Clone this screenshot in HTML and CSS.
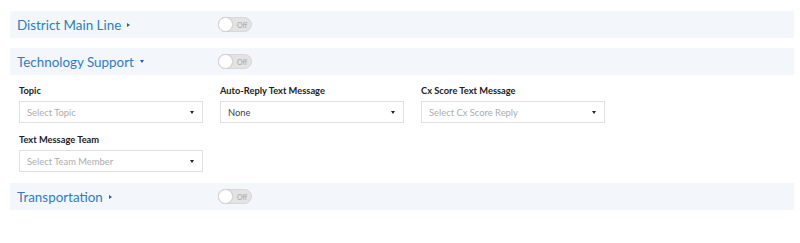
FILE: index.html
```html
<!DOCTYPE html>
<html>
<head>
<meta charset="utf-8">
<link rel="stylesheet" href="styles.css">
</head>
<body>
<div class="page">
  <section class="group">
    <div class="group-head">
      <div class="head-label"><span class="title">District Main Line</span><span class="caret caret-right"></span></div>
      <div class="toggle"><span class="knob"></span><span class="toggle-text">Off</span></div>
    </div>
  </section>

  <section class="group">
    <div class="group-head">
      <div class="head-label"><span class="title">Technology Support</span><span class="caret caret-down"></span></div>
      <div class="toggle"><span class="knob"></span><span class="toggle-text">Off</span></div>
    </div>
    <div class="form">
      <div class="field">
        <div class="label">Topic</div>
        <div class="select placeholder"><span>Select Topic</span><span class="arrow"></span></div>
      </div>
      <div class="field">
        <div class="label">Auto-Reply Text Message</div>
        <div class="select"><span>None</span><span class="arrow"></span></div>
      </div>
      <div class="field">
        <div class="label">Cx Score Text Message</div>
        <div class="select placeholder"><span>Select Cx Score Reply</span><span class="arrow"></span></div>
      </div>
      <div class="field">
        <div class="label">Text Message Team</div>
        <div class="select placeholder"><span>Select Team Member</span><span class="arrow"></span></div>
      </div>
    </div>
  </section>

  <section class="group">
    <div class="group-head">
      <div class="head-label"><span class="title">Transportation</span><span class="caret caret-right"></span></div>
      <div class="toggle"><span class="knob"></span><span class="toggle-text">Off</span></div>
    </div>
  </section>
</div>
</body>
</html>
```
FILE: styles.css
```css
html, body {
  margin: 0;
  padding: 0;
  background: #ffffff;
}
body {
  font-family: "Lato", "Open Sans", sans-serif;
}
.page {
  padding: 11px 6px 0 10px;
  display: flex;
  flex-direction: column;
  gap: 10px;
}
.group-head {
  height: 27px;
  background: #f3f7fc;
  display: flex;
  align-items: center;
  padding-left: 7px;
}
.head-label {
  width: 201px;
  display: flex;
  align-items: center;
}
.title {
  font-size: 13.4px;
  color: #2f7cc2;
  line-height: 16px;
}
.caret {
  display: inline-block;
  width: 0;
  height: 0;
  margin-left: 6px;
}
.caret-right {
  border-top: 2.5px solid transparent;
  border-bottom: 2.5px solid transparent;
  border-left: 3.5px solid #2a5e93;
}
.caret-down {
  border-left: 2.5px solid transparent;
  border-right: 2.5px solid transparent;
  border-top: 3.5px solid #2a5e93;
}
.toggle {
  position: relative;
  width: 34px;
  height: 15px;
  box-sizing: border-box;
  border-radius: 8px;
  background: #e3e3e3;
  border: 1px solid #d8d8d8;
  display: flex;
  align-items: center;
}
.knob {
  position: absolute;
  left: -1px;
  top: -1px;
  width: 15px;
  height: 15px;
  box-sizing: border-box;
  border-radius: 50%;
  background: #ffffff;
  border: 1px solid #d6d6d6;
  box-shadow: 0 0 1px rgba(0,0,0,0.15);
}
.toggle-text {
  margin-left: 18px;
  font-size: 7px;
  color: #a6a6a6;
  line-height: 8px;
}
.form {
  display: grid;
  grid-template-columns: repeat(3, 184px);
  column-gap: 17px;
  row-gap: 11px;
  padding: 10px 0 0 9px;
  margin-bottom: 1px;
}
.label {
  font-size: 9.3px;
  font-weight: 700;
  color: #222222;
  line-height: 11px;
  margin-bottom: 5px;
}
.select {
  height: 22px;
  box-sizing: border-box;
  border: 1px solid #e1e1e1;
  background: #ffffff;
  display: flex;
  align-items: center;
  justify-content: space-between;
  padding: 0 8px 0 7px;
  font-size: 9.4px;
  color: #444444;
}
.select.placeholder {
  color: #adadad;
}
.arrow {
  width: 0;
  height: 0;
  border-left: 2.5px solid transparent;
  border-right: 2.5px solid transparent;
  border-top: 3.5px solid #222222;
}
```
